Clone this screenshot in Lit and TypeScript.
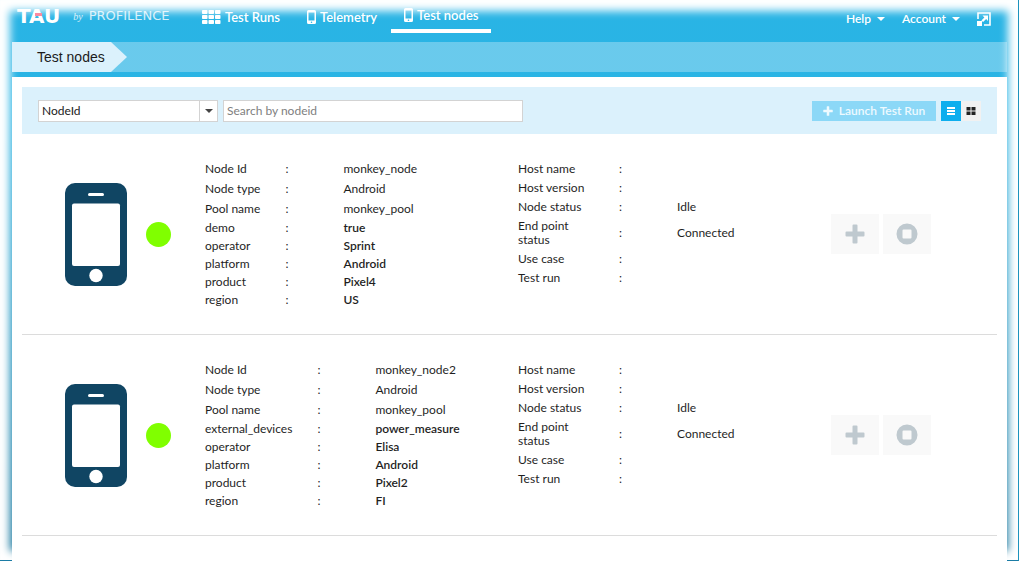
import { LitElement, html, css, svg, nothing } from "lit";
import { customElement, property, state } from "lit/decorators.js";
import { classMap } from "lit/directives/class-map.js";

interface Field {
  label: string;
  value: string;
  custom?: boolean;
}

interface TestNode {
  details: Field[];
  status: Field[];
}

const statusFields = (): Field[] => [
  { label: "Host name", value: "" },
  { label: "Host version", value: "" },
  { label: "Node status", value: "Idle" },
  { label: "End point status", value: "Connected" },
  { label: "Use case", value: "" },
  { label: "Test run", value: "" },
];

const nodes: TestNode[] = [
  {
    details: [
      { label: "Node Id", value: "monkey_node" },
      { label: "Node type", value: "Android" },
      { label: "Pool name", value: "monkey_pool" },
      { label: "demo", value: "true", custom: true },
      { label: "operator", value: "Sprint", custom: true },
      { label: "platform", value: "Android", custom: true },
      { label: "product", value: "Pixel4", custom: true },
      { label: "region", value: "US", custom: true },
    ],
    status: statusFields(),
  },
  {
    details: [
      { label: "Node Id", value: "monkey_node2" },
      { label: "Node type", value: "Android" },
      { label: "Pool name", value: "monkey_pool" },
      { label: "external_devices", value: "power_measure", custom: true },
      { label: "operator", value: "Elisa", custom: true },
      { label: "platform", value: "Android", custom: true },
      { label: "product", value: "Pixel2", custom: true },
      { label: "region", value: "FI", custom: true },
    ],
    status: statusFields(),
  },
];

const gridIcon = html`<svg width="19" height="14" viewBox="0 0 19 14" fill="currentColor" aria-hidden="true">
  ${[0, 5, 10].map((y) => [0, 6.5, 13].map((x) => svg`<rect x=${x} y=${y} width="5.5" height="4" rx="0.8"></rect>`))}
</svg>`;

const phoneIcon = html`<svg width="9" height="14" viewBox="0 0 9 14" aria-hidden="true">
  <path fill="currentColor" fill-rule="evenodd" d="M1.5 0h6A1.5 1.5 0 0 1 9 1.5v11A1.5 1.5 0 0 1 7.500 14h-6A1.500 1.500 0 0 1 0 12.500v-11A1.500 1.500 0 0 1 1.500 0zM1.500 2.500v8h6v-8zM4.500 11.500a.8.8 0 1 0 0 1.600.8.8 0 0 0 0-1.600z"></path>
</svg>`;

const caret = html`<svg width="8" height="4" viewBox="0 0 8 4" fill="currentColor" aria-hidden="true"><path d="M0 0h8L4 4z"></path></svg>`;

const plusIcon = (size: number) => html`<svg width=${size} height=${size} viewBox="0 0 20 20" fill="currentColor" aria-hidden="true">
  <path d="M8.500 0.500h3a1 1 0 0 1 1 1v6h6a1 1 0 0 1 1 1v3a1 1 0 0 1-1 1h-6v6a1 1 0 0 1-1 1h-3a1 1 0 0 1-1-1v-6h-6a1 1 0 0 1-1-1v-3a1 1 0 0 1 1-1h6v-6a1 1 0 0 1 1-1z"></path>
</svg>`;

@customElement("tau-header")
export class TauHeader extends LitElement {
  static styles = css`
    :host {
      display: block;
      color: #fff;
    }
    .bar {
      display: flex;
      align-items: flex-start;
      height: 42px;
      padding: 0 16px 0 5px;
      box-sizing: border-box;
    }
    .logo {
      display: flex;
      align-items: center;
      color: inherit;
      text-decoration: none;
      font-family: "DejaVu Sans", sans-serif;
      line-height: 20px;
      padding-top: 6px;
      width: 172px;
      white-space: nowrap;
    }
    .mark {
      position: relative;
      font-size: 20px;
      font-weight: 700;
    }
    .mark::after {
      content: "";
      position: absolute;
      left: 18px;
      top: 7px;
      width: 7px;
      height: 3px;
      background: #fb8ba0;
    }
    .by {
      font: italic 10px "Liberation Serif", serif;
      margin: 0 6px 0 13px;
      opacity: 0.8;
    }
    .company {
      font-size: 13px;
      opacity: 0.8;
    }
    nav {
      display: flex;
      gap: 1px;
      flex: 1;
    }
    nav a {
      display: flex;
      align-items: center;
      gap: 4px;
      box-sizing: border-box;
      height: 33px;
      padding: 1px 13px 0;
      color: inherit;
      font-size: 13px;
      font-weight: 600;
      text-decoration: none;
      white-space: nowrap;
    }
    nav a.active {
      border-bottom: 4px solid #fff;
    }
    .menus {
      display: flex;
      align-items: center;
      gap: 17px;
      height: 37px;
    }
    button {
      display: flex;
      align-items: center;
      gap: 6px;
      padding: 0;
      border: 0;
      background: none;
      color: inherit;
      font: inherit;
      font-weight: 600;
    }
    .crumbs {
      display: flex;
      height: 30px;
      background: rgba(255, 255, 255, 0.3);
    }
    .crumb {
      display: flex;
      align-items: center;
      width: 115px;
      box-sizing: border-box;
      padding-left: 25px;
      background: #dbf1fc;
      clip-path: polygon(0 0, 99px 0, 100% 50%, 99px 100%, 0 100%);
      color: #1b1b1b;
      font: 14px "Liberation Sans", Arial, sans-serif;
      text-decoration: none;
      white-space: nowrap;
    }
  `;

  render() {
    return html`
      <div class="bar">
        <a class="logo" href="#home">
          <span class="mark">TAU</span><span class="by">by</span><span class="company">PROFILENCE</span>
        </a>
        <nav>
          <a href="#runs">${gridIcon}Test Runs</a>
          <a href="#telemetry">${phoneIcon}Telemetry</a>
          <a href="#nodes" class="active" aria-current="page">${phoneIcon}Test nodes</a>
        </nav>
        <div class="menus">
          <button type="button">Help ${caret}</button>
          <button type="button">Account ${caret}</button>
          <button type="button" aria-label="Full screen">
            <svg width="14" height="14" viewBox="0 0 14 14" aria-hidden="true">
              <path d="M1 7V1h12v12H7" fill="none" stroke="currentColor" stroke-width="1.600"></path>
              <path d="M0 9h5v5H0zM5.500 3.500h5.500v5.500l-1.900-1.900-3 3-1.700-1.700 3-3z" fill="currentColor"></path>
            </svg>
          </button>
        </div>
      </div>
      <div class="crumbs"><a class="crumb" href="#nodes">Test nodes</a></div>
    `;
  }
}

@customElement("tau-toolbar")
export class TauToolbar extends LitElement {
  @state() private view: "list" | "grid" = "list";

  static styles = css`
    :host {
      display: flex;
      align-items: center;
      gap: 5px;
      box-sizing: border-box;
      height: 47px;
      padding: 0 16px;
      background: #dbf1fc;
    }
    .field {
      display: flex;
      position: relative;
    }
    select,
    input {
      box-sizing: border-box;
      height: 22px;
      margin: 0;
      padding: 0 3px;
      border: 1px solid #d3d3d3;
      border-radius: 0;
      background: #fff;
      color: #222;
      font: inherit;
    }
    select {
      appearance: none;
      width: 180px;
    }
    .arrow {
      position: absolute;
      right: 1px;
      top: 1px;
      display: flex;
      align-items: center;
      justify-content: center;
      width: 17px;
      height: 20px;
      border-left: 1px solid #d3d3d3;
      color: #444;
      pointer-events: none;
    }
    input {
      width: 300px;
    }
    input::placeholder {
      color: #808080;
      opacity: 1;
    }
    .launch {
      display: flex;
      align-items: center;
      justify-content: center;
      gap: 6px;
      width: 124px;
      height: 20px;
      margin-left: auto;
      padding: 0;
      border: 0;
      background: #8cd8f7;
      color: #eefaff;
      font: inherit;
      font-weight: 600;
      white-space: nowrap;
    }
    .views {
      display: flex;
    }
    .view {
      display: flex;
      align-items: center;
      justify-content: center;
      width: 20px;
      height: 20px;
      padding: 0;
      border: 0;
      background: #f1f1f1;
      color: #222;
    }
    .view.on {
      background: #0daeee;
      color: #fff;
    }
  `;

  render() {
    return html`
      <div class="field">
        <select aria-label="Search field">
          <option>NodeId</option>
        </select>
        <span class="arrow">${caret}</span>
      </div>
      <input type="text" aria-label="Search by nodeid" placeholder="Search by nodeid" />
      <button class="launch" type="button" disabled>${plusIcon(10)}Launch Test Run</button>
      <div class="views">
        <button
          type="button"
          aria-label="List view"
          class=${classMap({ view: true, on: this.view === "list" })}
          @click=${() => (this.view = "list")}
        >
          <svg width="8" height="8" viewBox="0 0 8 8" fill="currentColor"><path d="M0 0h8v2H0zM0 3h8v2H0zM0 6h8v2H0z"></path></svg>
        </button>
        <button
          type="button"
          aria-label="Grid view"
          class=${classMap({ view: true, on: this.view === "grid" })}
          @click=${() => (this.view = "grid")}
        >
          <svg width="10" height="8" viewBox="0 0 10 8" fill="currentColor"><path d="M0.500 0h4v3.500h-4zM5.500 0h4v3.500h-4zM0.500 4.500h4v3.500h-4zM5.500 4.500h4v3.500h-4z"></path></svg>
        </button>
      </div>
    `;
  }
}

@customElement("tau-node")
export class TauNode extends LitElement {
  @property({ attribute: false }) node!: TestNode;

  static styles = css`
    :host {
      display: grid;
      grid-template-columns: 62px 44px 347px 1fr auto;
      align-items: center;
      justify-items: start;
      box-sizing: border-box;
      padding: 25px 66px 25px 43px;
      border-bottom: 1px solid #dcdcdc;
    }
    .device {
      display: block;
    }
    .dot {
      width: 25px;
      height: 25px;
      margin-left: 19px;
      border-radius: 50%;
      background: #80ff00;
    }
    table {
      border-collapse: collapse;
      color: #1f1f1f;
    }
    th,
    td {
      padding: 0;
      font-weight: 400;
      text-align: left;
      line-height: 14px;
    }
    td {
      white-space: nowrap;
    }
    .colon {
      width: 58px;
    }
    .details {
      margin-left: 34px;
    }
    .details tr {
      height: 20px;
    }
    .details tr.custom {
      height: 18px;
    }
    .details th {
      padding-right: 25px;
      white-space: nowrap;
    }
    .custom .value {
      font-weight: 600;
    }
    .status {
      align-self: start;
    }
    .status tr {
      height: 19px;
    }
    .status th {
      width: 76px;
      padding: 2px 25px 2px 0;
    }
    .status tr.tall {
      height: 33px;
    }
    .actions {
      display: flex;
      gap: 4px;
    }
    button {
      display: flex;
      align-items: center;
      justify-content: center;
      width: 48px;
      height: 40px;
      padding: 0;
      border: 0;
      background: #f9f9f9;
      color: #bfc9cf;
    }
  `;

  private row(f: Field) {
    return html`<tr class=${classMap({ custom: !!f.custom, tall: f.label.length > 14 && !f.custom })}>
      <th scope="row">${f.label}</th>
      <td class="colon">:</td>
      <td class="value">${f.value || nothing}</td>
    </tr>`;
  }

  render() {
    return html`
      <svg class="device" width="62" height="103" viewBox="0 0 62 103" aria-hidden="true">
        <rect width="62" height="103" rx="10" fill="#104563"></rect>
        <rect x="23" y="10" width="16" height="3" rx="1.500" fill="#fff"></rect>
        <rect x="7" y="20.500" width="48" height="62.500" rx="2" fill="#fff"></rect>
        <circle cx="31" cy="92.500" r="6.700" fill="#fff"></circle>
      </svg>
      <div class="dot" role="img" aria-label="Online"></div>
      <table class="details"><tbody>${this.node.details.map((f) => this.row(f))}</tbody></table>
      <table class="status"><tbody>${this.node.status.map((f) => this.row(f))}</tbody></table>
      <div class="actions">
        <button type="button" aria-label="Add">${plusIcon(20)}</button>
        <button type="button" aria-label="Stop">
          <svg width="22" height="22" viewBox="0 0 22 22" aria-hidden="true">
            <path fill="currentColor" fill-rule="evenodd" d="M11 .5a10.500 10.500 0 1 0 0 21 10.500 10.500 0 0 0 0-21zM6.500 7.500a1 1 0 0 1 1-1h7a1 1 0 0 1 1 1v7a1 1 0 0 1-1 1h-7a1 1 0 0 1-1-1z"></path>
          </svg>
        </button>
      </div>
    `;
  }
}

@customElement("app-root")
export class AppRoot extends LitElement {
  static styles = css`
    :host {
      display: block;
      box-sizing: border-box;
      min-height: 100vh;
      padding: 0 11px 0 12px;
      border-right: 1px solid #1c93bd;
      border-bottom: 1px solid #1c7ca5;
      background: linear-gradient(#29b4e5, #2ab4e4 20%, #0f7199);
      box-shadow: inset 0 1px 9px 10px #fff;
      font: 12px Lato, "Open Sans", sans-serif;
    }
    main {
      box-sizing: border-box;
      min-height: calc(100vh - 77px);
      margin-top: 5px;
      margin-bottom: -1px;
      padding: 10px 10px 0;
      background: #fff;
    }
  `;

  render() {
    return html`
      <tau-header></tau-header>
      <main>
        <tau-toolbar></tau-toolbar>
        ${nodes.map((n) => html`<tau-node .node=${n}></tau-node>`)}
      </main>
    `;
  }
}
